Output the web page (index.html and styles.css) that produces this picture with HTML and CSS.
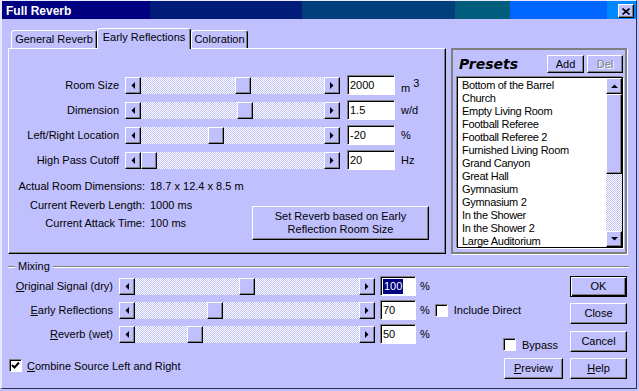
FILE: index.html
```html
<!DOCTYPE html>
<html lang="en">

<head>
    <meta charset="UTF-8">
    <title>Full Reverb</title>
    <link rel="stylesheet" href="styles.css">
</head>

<body>
    <div class="window">
        <div class="titlebar">
            <span class="title">Full Reverb</span>
            <span class="close">
                <svg width="8" height="7" viewBox="0 0 8 7"><path d="M0.5 0.5 L7.5 6.5 M7.5 0.5 L0.5 6.5" stroke="#000" stroke-width="1.6" fill="none"/></svg>
            </span>
        </div>

        <div class="top">
            <div class="tabbox">
                <div class="tabs">
                    <div class="tab t1">General Reverb</div>
                    <div class="tab t2 active">Early Reflections</div>
                    <div class="tab t3">Coloration</div>
                </div>
                <div class="panel">
                    <div class="fields">
                        <div class="field">
                            <label>Room Size</label>
                            <div class="slider">
                                <span class="arrow"><svg width="4" height="7"><polygon points="4,0 4,7 0.5,3.5" fill="#000"/></svg></span>
                                <span class="track"><span class="thumb" style="margin-left:94px"></span></span>
                                <span class="arrow"><svg width="4" height="7"><polygon points="0,0 0,7 3.5,3.5" fill="#000"/></svg></span>
                            </div>
                            <span class="edit">2000</span>
                            <span class="unit">m<sup>3</sup></span>
                        </div>
                        <div class="field">
                            <label>Dimension</label>
                            <div class="slider">
                                <span class="arrow"><svg width="4" height="7"><polygon points="4,0 4,7 0.5,3.5" fill="#000"/></svg></span>
                                <span class="track"><span class="thumb" style="margin-left:96px"></span></span>
                                <span class="arrow"><svg width="4" height="7"><polygon points="0,0 0,7 3.5,3.5" fill="#000"/></svg></span>
                            </div>
                            <span class="edit">1.5</span>
                            <span class="unit">w/d</span>
                        </div>
                        <div class="field">
                            <label>Left/Right Location</label>
                            <div class="slider">
                                <span class="arrow"><svg width="4" height="7"><polygon points="4,0 4,7 0.5,3.5" fill="#000"/></svg></span>
                                <span class="track"><span class="thumb" style="margin-left:67px"></span></span>
                                <span class="arrow"><svg width="4" height="7"><polygon points="0,0 0,7 3.5,3.5" fill="#000"/></svg></span>
                            </div>
                            <span class="edit">-20</span>
                            <span class="unit">%</span>
                        </div>
                        <div class="field">
                            <label>High Pass Cutoff</label>
                            <div class="slider">
                                <span class="arrow"><svg width="4" height="7"><polygon points="4,0 4,7 0.5,3.5" fill="#000"/></svg></span>
                                <span class="track"><span class="thumb" style="margin-left:0px"></span></span>
                                <span class="arrow"><svg width="4" height="7"><polygon points="0,0 0,7 3.5,3.5" fill="#000"/></svg></span>
                            </div>
                            <span class="edit">20</span>
                            <span class="unit">Hz</span>
                        </div>
                    </div>

                    <div class="info">
                        <div class="stats">
                            <span>Actual Room Dimensions:</span><span>18.7 x 12.4 x 8.5 m</span>
                            <span>Current Reverb Length:</span><span>1000 ms</span>
                            <span>Current Attack Time:</span><span>100 ms</span>
                        </div>
                        <div class="btn set">Set Reverb based on Early<br>Reflection Room Size</div>
                    </div>
                </div>
            </div>

            <div class="presets">
                <div class="presets-head">
                    <h3>Presets</h3>
                    <div class="btn add">Add</div>
                    <div class="btn del disabled">Del</div>
                </div>
                <div class="list">
                    <div class="items">
                        <div>Bottom of the Barrel</div>
                        <div>Church</div>
                        <div>Empty Living Room</div>
                        <div>Football Referee</div>
                        <div>Football Referee 2</div>
                        <div>Furnished Living Room</div>
                        <div>Grand Canyon</div>
                        <div>Great Hall</div>
                        <div>Gymnasium</div>
                        <div>Gymnasium 2</div>
                        <div>In the Shower</div>
                        <div>In the Shower 2</div>
                        <div>Large Auditorium</div>
                    </div>
                    <div class="scrollbar">
                        <span class="sbtn"><svg width="7" height="4"><polygon points="0,4 7,4 3.5,0.5" fill="#000"/></svg></span>
                        <span class="sthumb"></span>
                        <span class="strack"></span>
                        <span class="sbtn"><svg width="7" height="4"><polygon points="0,0 7,0 3.5,3.5" fill="#000"/></svg></span>
                    </div>
                </div>
            </div>
        </div>

        <div class="mix-head">
            <span class="etch short"></span>
            <span class="mix-title">Mixing</span>
            <span class="etch long"></span>
        </div>

        <div class="mix-body">
            <div class="mix-left">
                <div class="mrow">
                    <label><u>O</u>riginal Signal (dry)</label>
                    <div class="slider wide">
                        <span class="arrow"><svg width="4" height="7"><polygon points="4,0 4,7 0.5,3.5" fill="#000"/></svg></span>
                        <span class="track"><span class="thumb" style="margin-left:104px"></span></span>
                        <span class="arrow"><svg width="4" height="7"><polygon points="0,0 0,7 3.5,3.5" fill="#000"/></svg></span>
                    </div>
                    <span class="edit small"><span class="sel">100</span></span>
                    <span class="pct">%</span>
                </div>
                <div class="mrow">
                    <label><u>E</u>arly Reflections</label>
                    <div class="slider wide">
                        <span class="arrow"><svg width="4" height="7"><polygon points="4,0 4,7 0.5,3.5" fill="#000"/></svg></span>
                        <span class="track"><span class="thumb" style="margin-left:72px"></span></span>
                        <span class="arrow"><svg width="4" height="7"><polygon points="0,0 0,7 3.5,3.5" fill="#000"/></svg></span>
                    </div>
                    <span class="edit small">70</span>
                    <span class="pct">%</span>
                    <span class="check direct"></span>
                    <span class="check-label">Include Direct</span>
                </div>
                <div class="mrow">
                    <label><u>R</u>everb (wet)</label>
                    <div class="slider wide">
                        <span class="arrow"><svg width="4" height="7"><polygon points="4,0 4,7 0.5,3.5" fill="#000"/></svg></span>
                        <span class="track"><span class="thumb" style="margin-left:52px"></span></span>
                        <span class="arrow"><svg width="4" height="7"><polygon points="0,0 0,7 3.5,3.5" fill="#000"/></svg></span>
                    </div>
                    <span class="edit small">50</span>
                    <span class="pct">%</span>
                </div>
                <div class="combine">
                    <span class="check">
                        <svg width="9" height="9" viewBox="0 0 9 9"><path d="M1 4 L3.5 6.5 L8 1.5" stroke="#000" stroke-width="2" fill="none"/></svg>
                    </span>
                    <span class="check-label"><u>C</u>ombine Source Left and Right</span>
                </div>
            </div>

            <div class="mix-mid">
                <div class="bypass">
                    <span class="check"></span>
                    <span class="check-label">Bypass</span>
                </div>
                <div class="btn preview"><span><u>P</u>review</span></div>
            </div>

            <div class="mix-buttons">
                <div class="btn default">OK</div>
                <div class="btn">Close</div>
                <div class="btn">Cancel</div>
                <div class="btn"><span><u>H</u>elp</span></div>
            </div>
        </div>
    </div>
</body>

</html>
```

FILE: styles.css
```css
* {
    margin: 0;
    padding: 0;
    box-sizing: border-box;
}

body {
    background: #c0c0ff;
    color: #000;
    font: 11px "Liberation Sans", Arial, sans-serif;
}

.window {
    width: 637px;
    height: 389px;
    border-style: solid;
    border-width: 1px 1px 1px 2px;
    border-color: #e8e8ff #303050 #303050 #e8e8ff;
}

/* title bar */

.titlebar {
    height: 18px;
    display: flex;
    align-items: flex-start;
    color: #fff;
    background: linear-gradient(to right,
            #000080 0 148px,
            #001c78 148px 300px,
            #003f7c 300px 453px,
            #005e7c 453px 508px,
            #0066ff 508px 605px,
            #0088ff 605px);
}

.title {
    padding: 3px 0 0 4px;
    font-size: 12px;
    font-weight: bold;
    line-height: 14px;
}

.close {
    width: 16px;
    height: 14px;
    margin: 3px 2px 0 auto;
    display: flex;
    align-items: center;
    justify-content: center;
    background: #c0c0ff;
    border: 1px solid;
    border-color: #fff #000 #000 #fff;
    box-shadow: inset -1px -1px #808080;
}

/* shared 3d pieces */

.btn,
.arrow,
.thumb,
.sbtn,
.sthumb {
    background: #c0c0ff;
    border: 1px solid;
    border-color: #fff #000 #000 #fff;
    box-shadow: inset -1px -1px #808080;
}

.btn {
    display: flex;
    align-items: center;
    justify-content: center;
    text-align: center;
    line-height: 13px;
}

.btn.default {
    border-color: #000;
    box-shadow: inset 1px 1px #fff, inset -1px -1px #000, inset -2px -2px #808080;
}

.btn.disabled {
    color: #808080;
    text-shadow: 1px 1px #fff;
}

.edit {
    height: 20px;
    padding-left: 2px;
    line-height: 18px;
    background: #fff;
    border: 1px solid;
    border-color: #808080 #fff #fff #808080;
    box-shadow: inset 1px 1px #000;
}

.check {
    width: 13px;
    height: 13px;
    flex: none;
    display: flex;
    align-items: center;
    justify-content: center;
    background: #fff;
    border: 1px solid;
    border-color: #808080 #fff #fff #808080;
    box-shadow: inset 1px 1px #000;
}

.slider {
    width: 215px;
    height: 17px;
    display: flex;
}

.slider.wide {
    width: 256px;
}

.arrow {
    width: 16px;
    height: 17px;
    flex: none;
    display: flex;
    align-items: center;
    justify-content: center;
}

.track {
    flex: 1;
    display: flex;
    background: conic-gradient(#fff 25%, #c0c0ff 0 50%, #fff 0 75%, #c0c0ff 0) 0 0 / 2px 2px;
}

.thumb {
    width: 16px;
    height: 17px;
    flex: none;
}

/* top row: tabs + presets */

.top {
    display: flex;
    margin-top: 9px;
    padding-left: 6px;
}

.tabbox {
    width: 438px;
}

.tabs {
    height: 20px;
    display: flex;
    align-items: flex-end;
    padding-left: 3px;
}

.tab {
    height: 18px;
    padding-top: 2px;
    text-align: center;
    line-height: 13px;
    border: 1px solid;
    border-bottom: none;
    border-color: #fff #000 transparent #fff;
    border-radius: 3px 3px 0 0;
    box-shadow: inset -1px 0 #808080;
}

.t1 {
    width: 86px;
}

.t2 {
    width: 94px;
}

.t3 {
    width: 57px;
}

.tab.active {
    height: 21px;
    margin-bottom: -1px;
    position: relative;
    z-index: 1;
    background: #c0c0ff;
}

.panel {
    height: 206px;
    border: 1px solid;
    border-color: #fff #000 #000 #fff;
    box-shadow: inset -1px -1px #808080;
}

.fields {
    padding-top: 26px;
    display: flex;
    flex-direction: column;
    gap: 5px;
}

.field {
    height: 20px;
    display: flex;
    align-items: center;
    white-space: nowrap;
}

.field > *,
.mrow > * {
    flex: none;
}

.field label {
    width: 110px;
    margin-right: 6px;
    text-align: right;
}

.field .edit {
    width: 48px;
    margin-left: 7px;
}

.unit {
    margin-left: 6px;
}

.unit sup {
    margin-left: 3px;
    font-size: 11px;
    vertical-align: 5px;
}

.info {
    display: flex;
    align-items: flex-start;
    margin-top: 7px;
}

.stats {
    display: grid;
    grid-template-columns: 136px auto;
    column-gap: 5px;
    line-height: 18.5px;
    white-space: nowrap;
}

.stats span:nth-child(odd) {
    text-align: right;
}

.btn.set {
    width: 177px;
    height: 34px;
    margin: 29px 16px 0 auto;
}

/* presets */

.presets {
    width: 176px;
    height: 206px;
    margin: 20px 0 0 5px;
    padding: 5px 2px 0 4px;
    border: 2px solid #808080;
    box-shadow: 1px 1px #fff;
}

.presets-head {
    height: 18px;
    display: flex;
    align-items: center;
}

.presets-head h3 {
    flex: 1;
    margin-left: 2px;
    font: italic bold 14px "DejaVu Sans", sans-serif;
}

.btn.add {
    width: 37px;
    height: 18px;
}

.btn.del {
    width: 36px;
    height: 18px;
    margin-left: 3px;
}

.list {
    height: 171px;
    margin-top: 4px;
    display: flex;
    border: 1px solid #000;
    box-shadow: -1px -1px #808080, 1px 1px #fff;
}

.items {
    flex: 1;
    padding: 1px 0 0 4px;
    overflow: hidden;
    background: #fff;
    line-height: 13px;
    letter-spacing: -0.3px;
    white-space: nowrap;
}

.scrollbar {
    width: 16px;
    display: flex;
    flex-direction: column;
}

.sbtn {
    height: 16px;
    display: flex;
    align-items: center;
    justify-content: center;
}

.sthumb {
    height: 80px;
}

.strack {
    flex: 1;
    background: conic-gradient(#fff 25%, #c0c0ff 0 50%, #fff 0 75%, #c0c0ff 0) 0 0 / 2px 2px;
}

/* mixing */

.mix-head {
    height: 13px;
    margin-top: 6px;
    display: flex;
    line-height: 13px;
}

.etch {
    height: 2px;
    margin-top: 6px;
    border-top: 1px solid #808080;
    border-bottom: 1px solid #fff;
}

.etch.short {
    width: 7px;
    margin-left: 6px;
}

.mix-title {
    margin: 0 3px;
}

.etch.long {
    flex: 1;
    margin-right: 7px;
}

.mix-body {
    height: 103px;
    margin-top: 3px;
    display: flex;
}

.mix-left {
    flex: 1;
    min-width: 0;
    display: flex;
    flex-direction: column;
    gap: 4px;
}

.mrow {
    height: 20px;
    display: flex;
    align-items: center;
    white-space: nowrap;
}

.mrow label {
    width: 111px;
    margin-right: 6px;
    text-align: right;
}

.edit.small {
    width: 36px;
    margin-left: 5px;
}

.sel {
    display: inline-block;
    padding: 0 1px;
    line-height: 15px;
    color: #fff;
    background: #000080;
}

.pct {
    margin-left: 4px;
}

.check.direct {
    margin-left: 5px;
}

.check-label {
    margin-left: 6px;
    white-space: nowrap;
}

.combine {
    height: 13px;
    margin-top: 11px;
    padding-left: 7px;
    display: flex;
    align-items: center;
}

.combine .check-label {
    margin-left: 5px;
}

.mix-mid {
    width: 60px;
    margin-right: 7px;
    display: flex;
    flex-direction: column;
    justify-content: flex-end;
}

.bypass {
    height: 13px;
    margin-bottom: 7px;
    display: flex;
    align-items: center;
}

.btn.preview {
    height: 21px;
    margin-left: 1px;
}

.mix-buttons {
    width: 57px;
    margin-right: 9px;
    display: flex;
    flex-direction: column;
    gap: 6.33px;
}

.mix-buttons .btn {
    height: 21px;
}
```
